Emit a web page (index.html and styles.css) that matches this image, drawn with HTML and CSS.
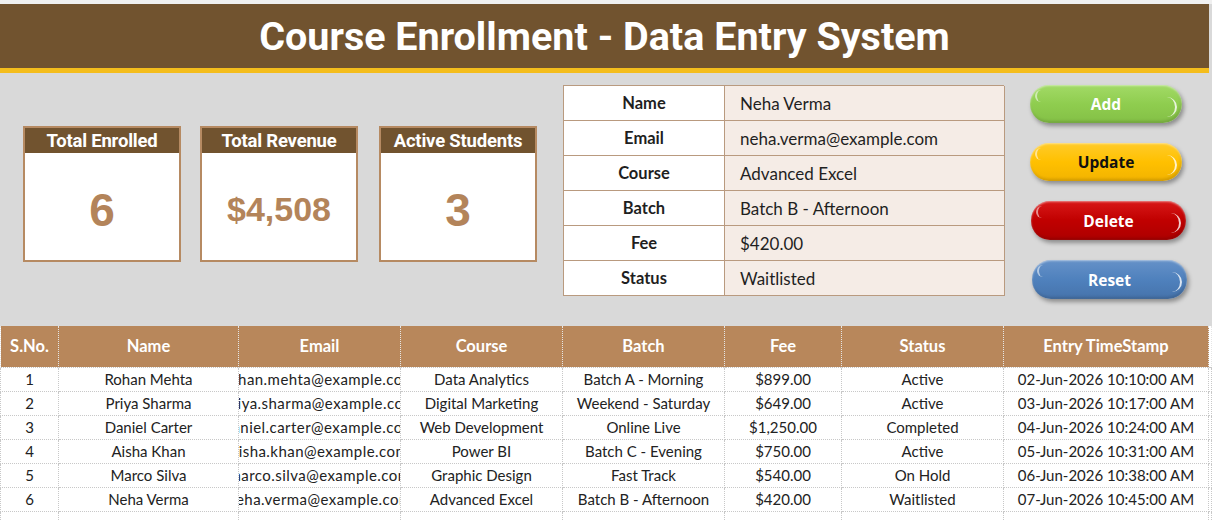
FILE: index.html
```html
<!DOCTYPE html>
<html>
<head>
<meta charset="utf-8">
<link rel="stylesheet" href="styles.css">
</head>
<body>
<div class="topstrip"></div>
<header class="title">Course Enrollment - Data Entry System</header>
<section class="main">
  <div class="kpis">
    <div class="card"><div class="card-head">Total Enrolled</div><div class="card-val big">6</div></div>
    <div class="card"><div class="card-head">Total Revenue</div><div class="card-val">$4,508</div></div>
    <div class="card"><div class="card-head">Active Students</div><div class="card-val big">3</div></div>
  </div>
  <div class="form">
    <div class="lbl">Name</div><div class="val">Neha Verma</div>
    <div class="lbl">Email</div><div class="val">neha.verma@example.com</div>
    <div class="lbl">Course</div><div class="val">Advanced Excel</div>
    <div class="lbl">Batch</div><div class="val">Batch B - Afternoon</div>
    <div class="lbl">Fee</div><div class="val">$420.00</div>
    <div class="lbl">Status</div><div class="val">Waitlisted</div>
  </div>
  <div class="buttons">
    <div class="btn add">Add</div>
    <div class="btn update">Update</div>
    <div class="btn delete">Delete</div>
    <div class="btn reset">Reset</div>
  </div>
</section>
<table class="grid">
  <colgroup>
    <col style="width:58px"><col style="width:180px"><col style="width:162px"><col style="width:162px"><col style="width:162px"><col style="width:117px"><col style="width:162px"><col style="width:205px"><col>
  </colgroup>
  <thead>
    <tr><th>S.No.</th><th>Name</th><th>Email</th><th>Course</th><th>Batch</th><th>Fee</th><th>Status</th><th>Entry TimeStamp</th><th class="blank"></th></tr>
  </thead>
  <tbody>
    <tr><td>1</td><td>Rohan Mehta</td><td><div class="clip"><span>rohan.mehta@example.com</span></div></td><td>Data Analytics</td><td>Batch A - Morning</td><td>$899.00</td><td>Active</td><td>02-Jun-2026 10:10:00 AM</td><td class="blank"></td></tr>
    <tr><td>2</td><td>Priya Sharma</td><td><div class="clip"><span>priya.sharma@example.com</span></div></td><td>Digital Marketing</td><td>Weekend - Saturday</td><td>$649.00</td><td>Active</td><td>03-Jun-2026 10:17:00 AM</td><td class="blank"></td></tr>
    <tr><td>3</td><td>Daniel Carter</td><td><div class="clip"><span>daniel.carter@example.com</span></div></td><td>Web Development</td><td>Online Live</td><td>$1,250.00</td><td>Completed</td><td>04-Jun-2026 10:24:00 AM</td><td class="blank"></td></tr>
    <tr><td>4</td><td>Aisha Khan</td><td><div class="clip"><span>aisha.khan@example.com</span></div></td><td>Power BI</td><td>Batch C - Evening</td><td>$750.00</td><td>Active</td><td>05-Jun-2026 10:31:00 AM</td><td class="blank"></td></tr>
    <tr><td>5</td><td>Marco Silva</td><td><div class="clip"><span>marco.silva@example.com</span></div></td><td>Graphic Design</td><td>Fast Track</td><td>$540.00</td><td>On Hold</td><td>06-Jun-2026 10:38:00 AM</td><td class="blank"></td></tr>
    <tr><td>6</td><td>Neha Verma</td><td><div class="clip"><span>neha.verma@example.com</span></div></td><td>Advanced Excel</td><td>Batch B - Afternoon</td><td>$420.00</td><td>Waitlisted</td><td>07-Jun-2026 10:45:00 AM</td><td class="blank"></td></tr>
    <tr class="empty"><td></td><td></td><td></td><td></td><td></td><td></td><td></td><td></td><td class="blank"></td></tr>
  </tbody>
</table>
</body>
</html>
```
FILE: styles.css
```css
* { box-sizing: border-box; }
html, body { margin: 0; padding: 0; }
body {
  width: 1212px;
  height: 521px;
  overflow: hidden;
  background: #d9d9d9;
  font-family: Lato, "Open Sans", sans-serif;
  color: #1f1f1f;
}
.topstrip { height: 4px; background: #f0f0f0; }
.title {
  height: 69px;
  margin-right: 3px;
  background: #71532f;
  border-bottom: 5px solid #f4bd1c;
  color: #fff;
  font-family: Roboto, "Noto Sans", sans-serif;
  font-weight: 700;
  font-size: 39.5px;
  text-align: center;
  line-height: 66px;
}
.main {
  height: 253px;
  display: flex;
  align-items: flex-start;
}
.kpis {
  display: flex;
  gap: 19px;
  margin-top: 53px;
  margin-left: 23px;
}
.card {
  width: 158px;
  height: 136px;
  background: #fff;
  border: 2px solid #b68a62;
  display: flex;
  flex-direction: column;
}
.card:last-child { margin-left: 2px; }
.card-head {
  height: 25px;
  background: #71532f;
  color: #fff;
  font-family: Roboto, sans-serif;
  font-weight: 700;
  font-size: 18.5px;
  text-align: center;
  line-height: 26px;
  letter-spacing: -0.2px;
}
.card-val {
  flex: 1;
  display: flex;
  align-items: center;
  justify-content: center;
  padding-top: 6px;
  font-family: "Liberation Sans", Arial, sans-serif;
  font-weight: 700;
  font-size: 34px;
  color: #b3845a;
}
.card-val.big { font-size: 46px; }
.form {
  margin-top: 12px;
  margin-left: 26px;
  width: 441px;
  display: grid;
  grid-template-columns: 161px 280px;
  grid-auto-rows: 35px;
  border-top: 1px solid #b99a7f;
  border-left: 1px solid #b99a7f;
}
.form > div {
  border-right: 1px solid #b99a7f;
  border-bottom: 1px solid #b99a7f;
  display: flex;
  align-items: center;
  font-size: 17px;
}
.lbl {
  background: #fff;
  justify-content: center;
  font-weight: 700;
  font-size: 16.5px !important;
}
.val {
  background: #f5ece6;
  padding-left: 15px;
}
.buttons {
  margin-left: 26px;
  margin-top: 12px;
  display: flex;
  flex-direction: column;
  gap: 20px;
}
.btn {
  position: relative;
  width: 152px;
  height: 38px;
  border-radius: 19px;
  display: flex;
  align-items: center;
  justify-content: center;
  font-family: "Open Sans", sans-serif;
  font-weight: 700;
  font-size: 15.5px;
  color: #fff;
  box-shadow: 2px 3px 4px rgba(0,0,0,0.35), inset 0 1px 2px rgba(255,255,255,0.5), inset -1px -2px 3px rgba(0,0,0,0.15);
}
.btn::after {
  content: "";
  position: absolute;
  right: 5px;
  top: 12px;
  width: 8px;
  height: 20px;
  border-radius: 0 12px 12px 0;
  border-right: 2px solid rgba(255,255,255,0.8);
}
.btn::before {
  content: "";
  position: absolute;
  left: 5px;
  top: 5px;
  width: 6px;
  height: 12px;
  border-radius: 12px 0 0 12px;
  border-left: 2px solid rgba(255,255,255,0.55);
}
.add { background: linear-gradient(#a2da66, #8fcd4f 50%, #84c046); }
.update { background: linear-gradient(#ffcb2a, #ffc000 50%, #f2b300); color: #111; }
.delete { background: linear-gradient(#d81818, #c00000 50%, #ad0000); width: 155px; height: 39px; margin-left: 1px; }
.reset { background: linear-gradient(#6591c8, #4f81bd 50%, #4673ab); width: 155px; height: 39px; margin-left: 2px; }

.grid {
  width: 1212px;
  table-layout: fixed;
  border-collapse: collapse;
  background: #fff;
  font-size: 15px;
}
.grid th {
  height: 41px;
  background: #b8875b;
  color: #fff;
  font-family: Lato, sans-serif;
  font-weight: 700;
  font-size: 16.5px;
  border-left: 1px dotted #e6e6e6;
  border-right: 1px dotted #e6e6e6;
  padding: 0;
}
.grid th.blank, .grid td.blank { background: #fff; }
.grid td {
  height: 24px;
  padding: 0;
  text-align: center;
  border: 1px dotted #c8c8c8;
  white-space: nowrap;
  overflow: hidden;
  color: #222;
}
.clip {
  display: flex;
  justify-content: center;
  overflow: hidden;
  width: 100%;
}
.clip span { flex: none; letter-spacing: 0.45px; }
.empty td { height: 12px; }
```
